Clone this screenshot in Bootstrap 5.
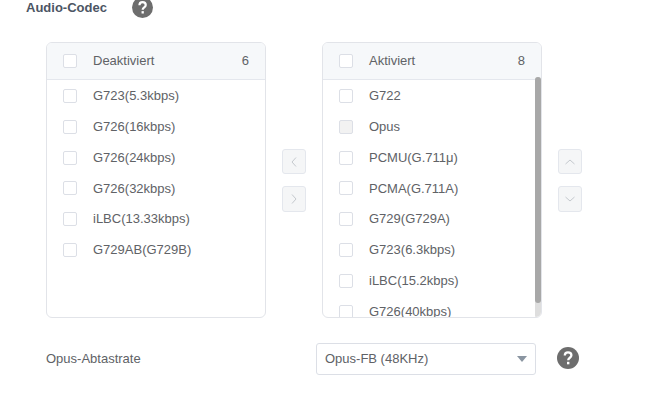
<!DOCTYPE html>
<html lang="de">
<head>
    <meta charset="UTF-8">
    <meta name="viewport" content="width=device-width, initial-scale=1.0">
    <title>Audio-Codec</title>
    <link href="https://cdn.jsdelivr.net/npm/bootstrap@5.3.0/dist/css/bootstrap.min.css" rel="stylesheet">
    <style>
        html, body { height: 100%; overflow: hidden; }
        body { font-family: "Liberation Sans", Arial, sans-serif; font-size: 13px; color: #606266; background: #fff; }
        .page-wrap { width: 654px; height: 403px; overflow: hidden; padding-left: 26px; }
        .codec-head { height: 18px; margin-top: -3px; line-height: 22px; }
        .codec-title { width: 106px; font-weight: 700; color: #4c5564; }
        .help-dot { width: 21px; height: 21px; flex: none; }
        .transfer-row { margin-top: 27px; margin-left: 20px; }
        .panel-box { width: 220px; height: 276px; border: 1px solid #e2e4e9; border-radius: 6px; overflow: hidden; position: relative; flex: none; }
        .panel-head { height: 37px; background: #f6f8fa; border-bottom: 1px solid #e4e7ed; padding: 0 16px; }
        .panel-head .cnt { margin-left: auto; }
        .tick { width: 14px; height: 14px; border: 1px solid #dcdfe6; border-radius: 2px; background: #fff; flex: none; margin-right: 16px; }
        .tick.off { background: #f2f2f2; }
        .panel-list { padding: .6px 16px 0; }
        .panel-item { height: 30.8px; }
        .move-col { width: 24px; margin: 0 16px; gap: 12px; padding-top: 107px; flex: none; }
        .move-btn { width: 24px; height: 25px; padding: 0; border: 1px solid #e4e7ed; border-radius: 3px; background: #f5f6f7; display: flex; align-items: center; justify-content: center; }
        .move-btn.tall { height: 26px; }
        .bar-track { position: absolute; right: 0; top: 34px; width: 6px; height: 241px; background: #dedede; border-radius: 3px; }
        .bar-thumb { height: 226px; background: #a8a8a8; border-radius: 3px; }
        .rate-row { margin-top: 25px; margin-left: 20px; }
        .rate-label { width: 270px; }
        .rate-select { width: 220px; height: 32px; border: 1px solid #dcdfe6; border-radius: 3px; padding: 0 8px; }
        .rate-caret { width: 0; height: 0; border-left: 5px solid transparent; border-right: 5px solid transparent; border-top: 6px solid #8a95a1; margin-left: auto; }
        .rate-help { margin-left: 21px; margin-bottom: 2px; width: 22px; height: 22px; flex: none; }
    </style>
</head>
<body>
    <div class="page-wrap">
        <div class="codec-head d-flex align-items-start">
            <div class="codec-title">Audio-Codec</div>
            <svg class="help-dot" viewBox="0 0 22 22"><circle cx="11" cy="11" r="11" fill="#6d6d6d"/><path d="M7.800 8.600C7.800 6.600 9.100 5.300 11 5.300s3.400 1.200 3.400 3c0 2.500-3.200 2.400-3.200 5" fill="none" stroke="#fff" stroke-width="2.300"/><rect x="10" y="14.800" width="2.400" height="2.500" fill="#fff"/></svg>
        </div>

        <div class="transfer-row d-flex">
            <div class="panel-box">
                <div class="panel-head d-flex align-items-center"><span class="tick"></span><span>Deaktiviert</span><span class="cnt">6</span></div>
                <div class="panel-list">
                    <div class="panel-item d-flex align-items-center"><span class="tick"></span>G723(5.3kbps)</div>
                    <div class="panel-item d-flex align-items-center"><span class="tick"></span>G726(16kbps)</div>
                    <div class="panel-item d-flex align-items-center"><span class="tick"></span>G726(24kbps)</div>
                    <div class="panel-item d-flex align-items-center"><span class="tick"></span>G726(32kbps)</div>
                    <div class="panel-item d-flex align-items-center"><span class="tick"></span>iLBC(13.33kbps)</div>
                    <div class="panel-item d-flex align-items-center"><span class="tick"></span>G729AB(G729B)</div>
                </div>
            </div>

            <div class="move-col d-flex flex-column">
                <button class="move-btn"><svg width="6" height="10" viewBox="0 0 6 10"><path d="M5 .5 1 5l4 4.500" fill="none" stroke="#c4c8cd"/></svg></button>
                <button class="move-btn tall"><svg width="6" height="10" viewBox="0 0 6 10"><path d="M1 .5 5 5 1 9.500" fill="none" stroke="#c4c8cd"/></svg></button>
            </div>

            <div class="panel-box">
                <div class="panel-head d-flex align-items-center"><span class="tick"></span><span>Aktiviert</span><span class="cnt">8</span></div>
                <div class="panel-list">
                    <div class="panel-item d-flex align-items-center"><span class="tick"></span>G722</div>
                    <div class="panel-item d-flex align-items-center"><span class="tick off"></span>Opus</div>
                    <div class="panel-item d-flex align-items-center"><span class="tick"></span>PCMU(G.711μ)</div>
                    <div class="panel-item d-flex align-items-center"><span class="tick"></span>PCMA(G.711A)</div>
                    <div class="panel-item d-flex align-items-center"><span class="tick"></span>G729(G729A)</div>
                    <div class="panel-item d-flex align-items-center"><span class="tick"></span>G723(6.3kbps)</div>
                    <div class="panel-item d-flex align-items-center"><span class="tick"></span>iLBC(15.2kbps)</div>
                    <div class="panel-item d-flex align-items-center"><span class="tick"></span>G726(40kbps)</div>
                </div>
                <div class="bar-track"><div class="bar-thumb"></div></div>
            </div>

            <div class="move-col d-flex flex-column">
                <button class="move-btn"><svg width="10" height="6" viewBox="0 0 10 6"><path d="M.5 5 5 1l4.500 4" fill="none" stroke="#c4c8cd"/></svg></button>
                <button class="move-btn tall"><svg width="10" height="6" viewBox="0 0 10 6"><path d="M.5 1 5 5l4.500-4" fill="none" stroke="#c4c8cd"/></svg></button>
            </div>
        </div>

        <div class="rate-row d-flex align-items-center">
            <div class="rate-label">Opus-Abtastrate</div>
            <div class="rate-select d-flex align-items-center"><span>Opus-FB (48KHz)</span><span class="rate-caret"></span></div>
            <svg class="rate-help" viewBox="0 0 22 22"><circle cx="11" cy="11" r="11" fill="#6d6d6d"/><path d="M7.800 8.600C7.800 6.600 9.100 5.300 11 5.300s3.400 1.200 3.400 3c0 2.500-3.200 2.400-3.200 5" fill="none" stroke="#fff" stroke-width="2.300"/><rect x="10" y="14.800" width="2.400" height="2.500" fill="#fff"/></svg>
        </div>
    </div>
    <script src="https://cdn.jsdelivr.net/npm/bootstrap@5.3.0/dist/js/bootstrap.bundle.min.js"></script>
</body>
</html>
